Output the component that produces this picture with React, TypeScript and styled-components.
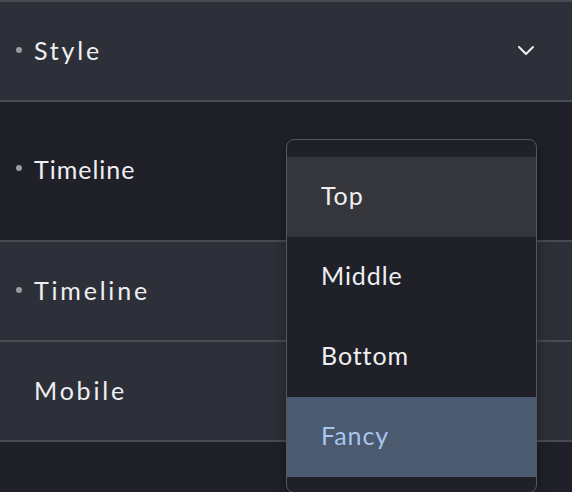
import { FC } from "react";
import styled, { createGlobalStyle } from "styled-components";

const GlobalStyle = createGlobalStyle`
  html, body {
    margin: 0;
    padding: 0;
    background: #202128;
    font-family: Lato, "Open Sans", sans-serif;
    -webkit-font-smoothing: antialiased;
  }
`;

const Page = styled.div`
  position: relative;
  width: 572px;
  height: 492px;
  overflow: hidden;
  background: #202128;
  border-top: 2px solid #494b53;
  box-sizing: border-box;
`;

const Row = styled.div<{ $tall?: boolean; $active?: boolean }>`
  display: flex;
  align-items: center;
  box-sizing: border-box;
  height: ${(p) => (p.$tall ? "140px" : "100px")};
  padding: ${(p) => (p.$tall ? "0 36px 5px 16px" : "0 36px 2px 16px")};
  background: ${(p) => (p.$active ? "#202128" : "#2e3039")};
  border-bottom: 2px solid #494b53;
`;

const Dot = styled.span<{ $hidden?: boolean }>`
  width: 6px;
  height: 6px;
  border-radius: 50%;
  background: #9a9ca3;
  margin-right: 12px;
  margin-bottom: 1px;
  visibility: ${(p) => (p.$hidden ? "hidden" : "visible")};
`;

const Label = styled.span<{ $spaced?: boolean }>`
  color: #efeff1;
  font-size: 25px;
  font-weight: 400;
  letter-spacing: ${(p) => (p.$spaced ? "2.8px" : "1px")};
  flex: 1;
`;

const Chevron = styled.svg`
  width: 20px;
  height: 12px;
  margin-top: 2px;
`;

const Menu = styled.div`
  position: absolute;
  left: 286px;
  top: 137px;
  width: 251px;
  height: 354px;
  box-sizing: border-box;
  padding: 17px 0 16px;
  background: #202128;
  border: 1.5px solid #55575d;
  border-radius: 8px;
  box-shadow: 0 4px 14px rgba(0, 0, 0, 0.35);
  overflow: hidden;
`;

const Option = styled.div<{ $hover?: boolean; $selected?: boolean }>`
  display: flex;
  align-items: center;
  box-sizing: border-box;
  height: 80px;
  padding: 0 0 5px 34px;
  font-size: 25px;
  font-weight: 400;
  letter-spacing: 0.9px;
  color: ${(p) => (p.$selected ? "#a8c4ef" : "#efeff1")};
  background: ${(p) =>
    p.$selected ? "#4b5a6e" : p.$hover ? "#35363c" : "transparent"};
`;

type Item = {
  label: string;
  dot: boolean;
  spaced: boolean;
  tall?: boolean;
  active?: boolean;
  chevron?: boolean;
};

const rows: Item[] = [
  { label: "Style", dot: true, spaced: true, chevron: true },
  { label: "Timeline", dot: true, spaced: false, tall: true, active: true },
  { label: "Timeline", dot: true, spaced: true },
  { label: "Mobile", dot: false, spaced: true },
];

const options = ["Top", "Middle", "Bottom", "Fancy"];

const App: FC = () => {
  return (
    <>
      <GlobalStyle />
      <Page>
        {rows.map((r, i) => (
          <Row key={i} $tall={r.tall} $active={r.active}>
            <Dot $hidden={!r.dot} />
            <Label $spaced={r.spaced}>{r.label}</Label>
            {r.chevron && (
              <Chevron viewBox="0 0 20 12" fill="none">
                <path
                  d="M3 2l7 7 7-7"
                  stroke="#f2f2f4"
                  strokeWidth="2"
                  strokeLinecap="round"
                  strokeLinejoin="round"
                />
              </Chevron>
            )}
          </Row>
        ))}
        <Menu>
          {options.map((o) => (
            <Option key={o} $hover={o === "Top"} $selected={o === "Fancy"}>
              {o}
            </Option>
          ))}
        </Menu>
      </Page>
    </>
  );
};

export default App;
